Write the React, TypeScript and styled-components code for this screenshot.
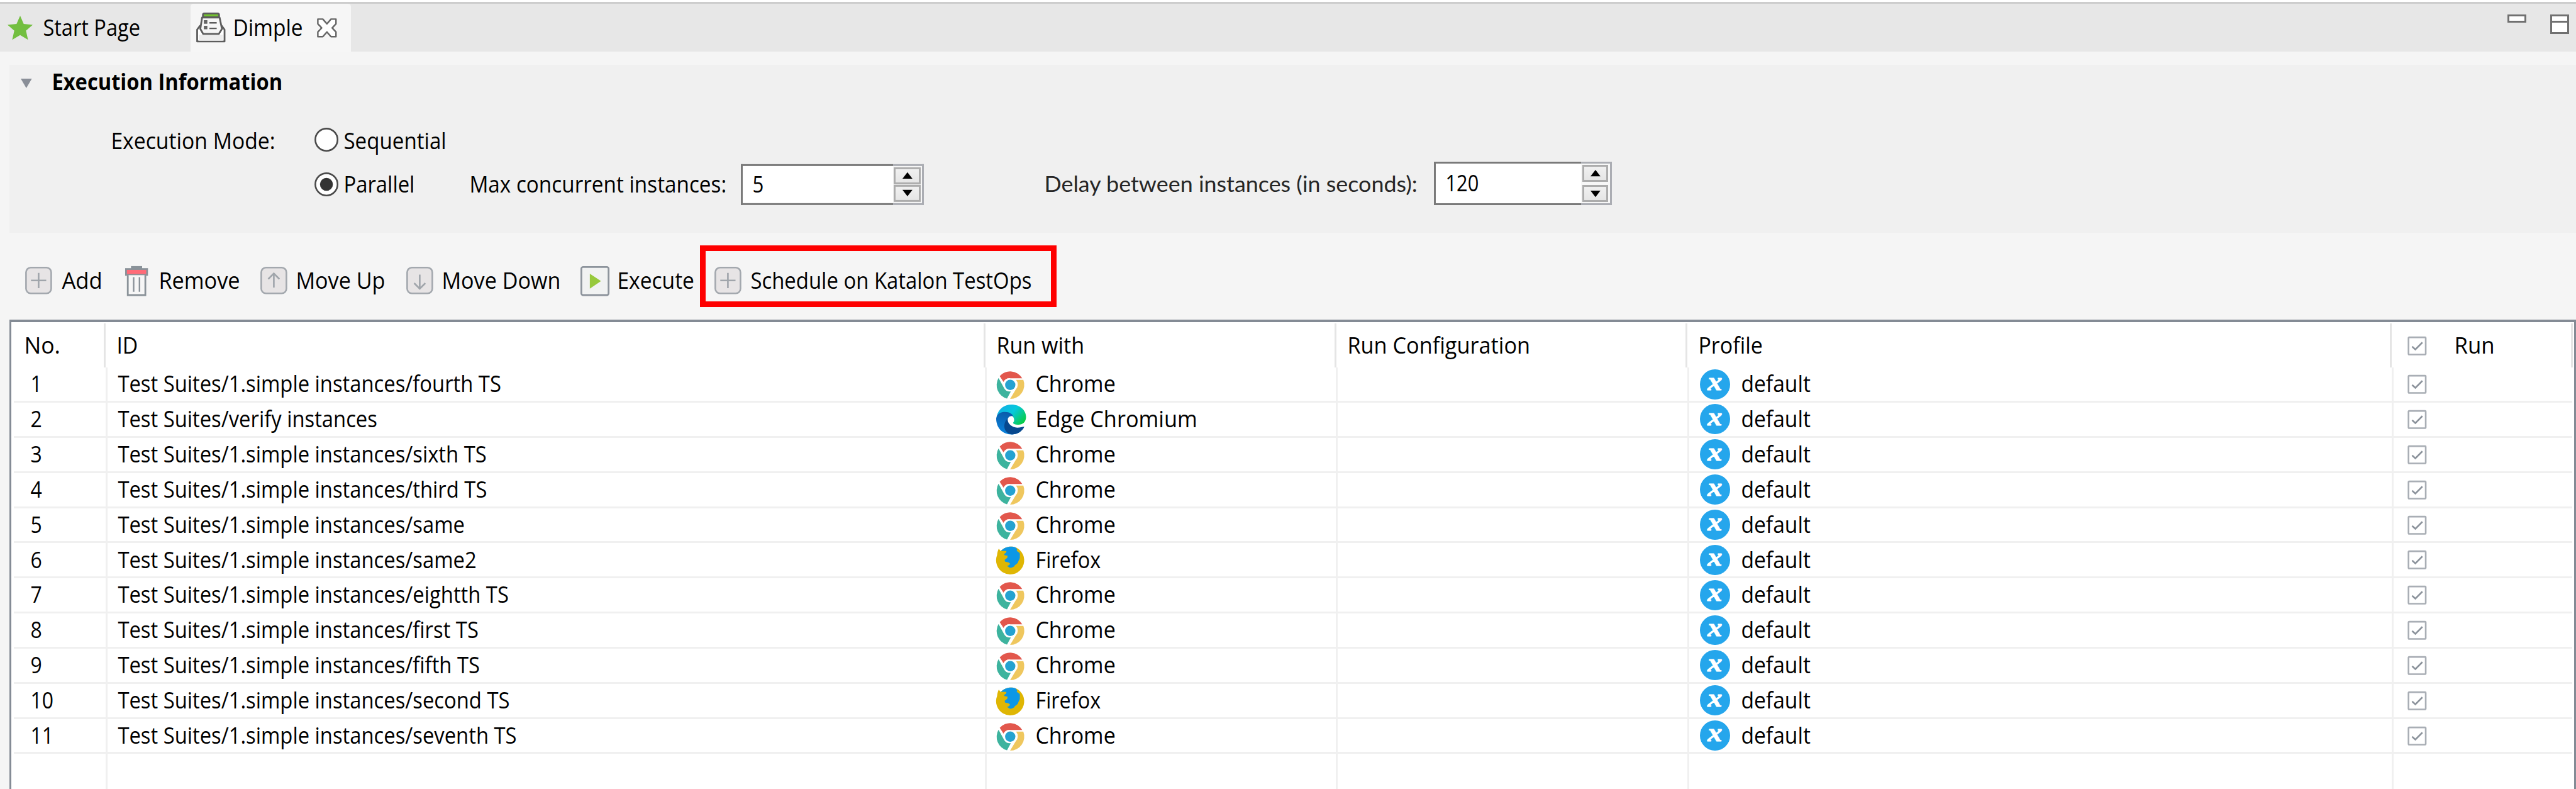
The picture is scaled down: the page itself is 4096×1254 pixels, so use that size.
import React from "react";
import styled, { createGlobalStyle, css } from "styled-components";

/* Design units are converted to CSS pixels through one scale factor. */
const SCALE = 4096 / 4400;
const u = (n: number) => `${(n * SCALE).toFixed(3)}px`;

const GlobalStyle = createGlobalStyle`
  * { box-sizing: border-box; }
  html, body { margin: 0; padding: 0; background: #f5f5f5; }
  body { overflow: hidden; font-family: "Open Sans", "Noto Sans", sans-serif; color: #000; }
`;

const Window = styled.div`
  display: flex;
  flex-direction: column;
  width: 4096px;
  height: 1254px;
  overflow: hidden;
  background: #f5f5f5;
`;

const Label = styled.span<{ $k?: number; $w?: number; $dy?: number; $ml?: number; $bold?: boolean; $humanist?: boolean }>`
  display: block;
  flex: none;
  white-space: nowrap;
  font-size: ${u(39)};
  line-height: ${u(52)};
  transform: translate(${u(1.5)}, ${(p) => u((p.$dy ?? 0) + 1.2)}) scaleX(${(p) => p.$k ?? 0.92});
  transform-origin: left center;
  width: ${(p) => (p.$w === undefined ? "auto" : u(p.$w))};
  margin-left: ${(p) => u(p.$ml ?? 0)};
  font-weight: ${(p) => (p.$bold ? 700 : 400)};
  ${(p) =>
    p.$humanist &&
    css`
      font-family: Lato, sans-serif;
      font-size: ${u(38)};
      color: #262626;
    `}
`;

const Svg = styled.svg<{ $w: number; $h: number; $dy?: number; $ml?: number }>`
  display: block;
  flex: none;
  width: ${(p) => u(p.$w)};
  height: ${(p) => u(p.$h)};
  margin-left: ${(p) => u(p.$ml ?? 0)};
  transform: translateY(${(p) => u(p.$dy ?? 0)});
  overflow: visible;
`;

/* ---------- tabs ---------- */

const TabBar = styled.header`
  display: flex;
  flex: none;
  height: ${u(88.3)};
  border-top: ${u(3.3)} solid #fff;
  background: #e7e7e7;
  box-shadow: inset 0 ${u(3.3)} 0 #cdcdcd;
  padding-top: ${u(3.3)};
`;

const Tab = styled.div<{ $width: number; $pad: number; $active?: boolean }>`
  display: flex;
  align-items: center;
  width: ${(p) => u(p.$width)};
  padding-left: ${(p) => u(p.$pad)};
  background: ${(p) => (p.$active ? "#f6f6f6" : "transparent")};
  border-radius: ${u(5)} ${u(5)} 0 0;
`;

const WindowControls = styled.div`
  display: flex;
  align-items: flex-start;
  gap: ${u(41)};
  margin: ${u(18.5)} ${u(12)} 0 auto;
`;

const MinimizeMark = styled.div`
  width: ${u(32)};
  height: ${u(13.5)};
  border: ${u(3.3)} solid #707070;
  background: #fff;
`;

const MaximizeMark = styled.div`
  display: flex;
  flex-direction: column;
  width: ${u(32)};
  height: ${u(33)};
  border: ${u(3.3)} solid #707070;
  background: #fff;

  &::before {
    content: "";
    height: ${u(6.8)};
    border-bottom: ${u(3.3)} solid #707070;
  }
`;

/* ---------- execution section ---------- */

const Section = styled.section`
  display: flex;
  flex-direction: column;
  flex: none;
  height: ${u(287)};
  margin: ${u(22)} 0 0 ${u(16)};
  background: #f0f0f0;
`;

const SectionTitle = styled.div`
  display: flex;
  align-items: center;
  height: ${u(52)};
  padding-left: ${u(19)};
  margin-bottom: ${u(37)};
`;

const FormRow = styled.div`
  display: flex;
  align-items: center;
  height: ${u(76)};
`;

const FormCaption = styled.div`
  flex: none;
  width: ${u(521)};
  padding-left: ${u(172)};
`;

const SpinnerBox = styled.div<{ $w: number; $h: number; $dy: number; $side: number }>`
  display: grid;
  grid-template-columns: 1fr ${(p) => u(p.$side)};
  flex: none;
  width: ${(p) => u(p.$w)};
  height: ${(p) => u(p.$h)};
  transform: translateY(${(p) => u(p.$dy)});
`;

const SpinnerValue = styled.div`
  display: flex;
  align-items: center;
  background: #fff;
  border: ${u(3.3)} solid #7a7a7a;
  border-right: 0;
  padding-left: ${u(15)};
`;

const SpinnerButtons = styled.div`
  display: flex;
  flex-direction: column;
  justify-content: space-between;
  padding: ${u(2.5)} ${u(2.5)} ${u(2.5)} ${u(2)};
  background: #f7f7f7;
  border: ${u(3.3)} solid #abadb3;
  border-left: 0;
`;

const SpinnerButton = styled.div`
  display: flex;
  align-items: center;
  justify-content: center;
  height: ${u(28.5)};
  border: ${u(3.3)} solid #acacac;
  background: linear-gradient(#f0f0f0, #e6e6e6);
`;

/* ---------- toolbar ---------- */

const Toolbar = styled.nav`
  display: flex;
  align-items: center;
  flex: none;
  height: ${u(148)};
  padding-left: ${u(43)};
`;

const Tool = styled.div<{ $w: number }>`
  display: flex;
  align-items: center;
  flex: none;
  width: ${(p) => u(p.$w)};
`;

const Highlight = styled.div`
  display: flex;
  align-items: center;
  width: ${u(609)};
  height: ${u(105)};
  padding-left: ${u(15)};
  border: ${u(10)} solid #fe0000;
`;

/* ---------- table ---------- */

const Table = styled.main`
  display: flex;
  flex-direction: column;
  flex: 1;
  min-height: 0;
  margin-left: ${u(16)};
  background: #fff;
  border: solid #848b95;
  border-width: ${u(4.5)} ${u(3.3)} 0 ${u(3.3)};
`;

const HeaderRow = styled.div`
  display: grid;
  flex: none;
  grid-template-columns: ${[161, 1503, 599, 600, 1203, 309].map(u).join(" ")};
  height: ${u(78)};
  padding-top: ${u(2.5)};
`;

const HeaderCell = styled.div<{ $pad: number }>`
  display: flex;
  align-items: center;
  padding-left: ${(p) => u(p.$pad)};
  border-right: ${u(3.3)} solid #e5e5e5;
`;

const BodyRow = styled.div<{ $fill?: boolean }>`
  display: grid;
  flex: ${(p) => (p.$fill ? "1" : "none")};
  grid-template-columns: ${[160, 1502.5, 599.5, 600, 1203, 305].map(u).join(" ")};
  height: ${(p) => (p.$fill ? "auto" : u(60))};
  width: ${u(4370)};
  margin-left: ${u(4)};
  border-bottom: ${(p) => (p.$fill ? "0" : `${u(3.3)} solid #f0f0f0`)};
`;

const Cell = styled.div<{ $pad?: number }>`
  display: flex;
  align-items: center;
  min-width: 0;
  padding-left: ${(p) => u(p.$pad ?? 0)};
  border-right: ${u(3.3)} solid #f0f0f0;

  &:last-child {
    border-right: 0;
  }
`;

const BrowserSlot = styled.div`
  flex: none;
  width: ${u(66)};
`;

const ProfileBadge = styled.div`
  display: flex;
  align-items: center;
  justify-content: center;
  flex: none;
  width: ${u(51.5)};
  height: ${u(51.5)};
  border-radius: 50%;
  background: #25a6ec;
  color: #fff;
  font: italic 700 ${u(46)} / ${u(40)} "Liberation Serif", serif;
  -webkit-text-stroke: ${u(1.2)} #fff;

  span {
    display: block;
    transform: translateY(${u(-5)}) scaleX(1.08);
  }
`;

/* ---------- icons ---------- */

const StarIcon = () => (
  <Svg $w={43} $h={41} viewBox="0 0 43 41">
    <path fill="#73bf40" d="M21.5 0 27.6 14 43 15.5 31.500 25.600 35 41 21.500 33 8 41 11.500 25.600 0 15.500 15.400 14Z" />
  </Svg>
);

const SuiteIcon = () => (
  <Svg $w={50} $h={51} viewBox="0 0 50 51" fill="none" stroke="#5c5c5c" strokeWidth="3" strokeLinejoin="round">
    <path fill="#fff" d="M7 22 1.600 29V49.400H48.400V29L43 22" />
    <path fill="#ececec" stroke="none" d="M4.500 38H45.500V48H4.500Z" />
    <path fill="#f6f6f6" d="M10 8.500H40L44 28 38.500 36.500H12L7 28Z" />
    <path fill="#73c22f" d="M11.500 8V4Q11.500 1.500 14 1.500H36.500Q39 1.500 39 4V8Z" />
    <path fill="#666" stroke="none" d="M13 13h6v6h-6zM13 22.500h6v6h-6z" />
    <path strokeWidth="2.600" d="M22.500 17.500H35M22.500 27H35" />
  </Svg>
);

const CloseIcon = () => (
  <Svg $w={34} $h={33} viewBox="0 0 34 33">
    <path
      fill="#fff"
      stroke="#666"
      strokeWidth="2.600"
      strokeLinejoin="round"
      d="M1.500 1.500H10L17 9.500 24 1.500H32.500V9.500L26 16.500 32.500 23.500V31.500H24L17 23.500 10 31.500H1.500V23.500L8 16.500 1.500 9.500Z"
    />
  </Svg>
);

const TwistieIcon = () => (
  <Svg $w={19} $h={16} $dy={6.5} viewBox="0 0 19 16">
    <path fill="#8a8f98" d="M0 0H19L9.500 16Z" />
  </Svg>
);

const Radio = ({ checked }: { checked?: boolean }) => (
  <Svg $w={41} $h={41} $dy={1} viewBox="0 0 41 41">
    <circle cx="20.5" cy="20.5" r="19" fill="#fff" stroke="#4a4a4a" strokeWidth="2.800" />
    {checked && <circle cx="20.5" cy="20.5" r="11" fill="#333" />}
  </Svg>
);

const Arrow = ({ down }: { down?: boolean }) => (
  <Svg $w={17} $h={11} viewBox="0 0 17 11">
    <path fill="#000" d={down ? "M0 0H17L8.500 11Z" : "M8.500 0 17 11H0Z"} />
  </Svg>
);

const BoxIcon = ({ glyph }: { glyph: "plus" | "up" | "down" }) => {
  const paths = {
    plus: "M23 11V37M10 24H36",
    up: "M23 36V12M13.500 21.500 23 12 32.500 21.500",
    down: "M23 14V38M13.500 28.500 23 38 32.500 28.500",
  };
  return (
    <Svg $w={46} $h={48} $dy={8} viewBox="0 0 46 48" fill="none">
      <rect x="1.500" y="2" width="43" height="44" rx="8" fill="#e7e4e5" stroke="#a3a8ae" strokeWidth="2.800" />
      <path d={paths[glyph]} stroke="#a0a5ab" strokeWidth="2.800" />
    </Svg>
  );
};

const TrashIcon = () => (
  <Svg $w={39} $h={51} $dy={8.5} viewBox="0 0 39 51" fill="none" stroke="#8a9299">
    <path d="M10 2.500H29" strokeWidth="5" />
    <rect x="1.500" y="5" width="36" height="10" fill="#ff6b78" strokeWidth="3" />
    <path d="M4.500 15.500V49.500H34.500V15.500" fill="#f6f6f6" strokeWidth="3" />
    <path d="M14.500 19V44M24.500 19V44" strokeWidth="2.600" />
  </Svg>
);

const PlayIcon = () => (
  <Svg $w={49.5} $h={51} $dy={8.5} viewBox="0 0 49.500 51">
    <rect x="1.500" y="1.500" width="46.500" height="48" rx="3" fill="#f1f2f2" stroke="#8d949c" strokeWidth="3" />
    <path fill="#97c93c" d="M16 13 35 25.500 16 38.500Z" />
  </Svg>
);

const CheckIcon = () => (
  <Svg $w={33} $h={33} $dy={0.5} viewBox="0 0 33 33" fill="none">
    <rect x="1.800" y="1.800" width="29.400" height="29.400" rx="1" stroke="#a9aeb5" strokeWidth="2.800" />
    <path d="M8 17.500 13.500 22.500 25.500 10.500" stroke="#8b929b" strokeWidth="2.800" />
  </Svg>
);

const ChromeIcon = () => (
  <Svg $w={48} $h={48} $dy={1.5} viewBox="0 0 48 48">
    <path fill="#e2574c" d="M6 9A24 24 0 0 1 44.500 12.700H24.500A12 12 0 0 0 12.500 19Z" />
    <path fill="#3db39e" d="M4 12.300 13 28.500A12 12 0 0 0 25 35.300L18.500 47.500A24 24 0 0 1 4 12.300Z" />
    <path fill="#efc75e" d="M34 15.500H46.400A24 24 0 0 1 23.800 48L33 32.500A12.500 12.500 0 0 0 34 15.500Z" />
    <circle cx="24" cy="24" r="8.800" fill="#25a2d0" />
  </Svg>
);

const EdgeIcon = () => (
  <Svg $w={51} $h={51} viewBox="0 0 51 51">
    <defs>
      <linearGradient id="edgeTop" x1="0" y1="0.200" x2="1" y2="0.800">
        <stop offset="0" stopColor="#14aee6" />
        <stop offset="0.480" stopColor="#06c8dc" />
        <stop offset="1" stopColor="#08cc3c" />
      </linearGradient>
      <linearGradient id="edgeLeft" x1="0.500" y1="0" x2="0.200" y2="1">
        <stop offset="0" stopColor="#0a5aa8" />
        <stop offset="1" stopColor="#0a84de" />
      </linearGradient>
    </defs>
    <path
      fill="url(#edgeTop)"
      d="M1 20C4 7 14 0 26 0C41 0 51 10 51 21C51 30 45 34.500 38 34.500C32 34.500 28.500 33 29 31C31 28 31 26 30 23C27 15 12 10 1 20Z"
    />
    <path fill="url(#edgeLeft)" d="M0 24C1 15 8 12.500 15 12.500C23 12.500 28 16 29.500 20.500C24 18 20 22 19.500 26C19 35 27 42 38 43.500C48 43 38 51 25.500 51C11 51 0 40 0 24Z" />
    <path fill="#07488e" d="M19.500 24C19 33 27 39 36 39.500C42 39.500 46 37 48 38C45 45 37 51 27 51C18 50 13 43 14 35C14.500 30 17 26 19.500 24Z" />
  </Svg>
);

const FirefoxIcon = () => (
  <Svg $w={48} $h={48} $dy={1.5} viewBox="0 0 48 48">
    <path fill="#dfb603" d="M4.500 4 7.500 8C17-2 33-2 41 7A24 24 0 1 1 1.500 15C2 10 3 7 4.500 4Z" />
    <path
      fill="#0c97e6"
      d="M8 8C14 1 25-1.500 33 1.800L36 5 35 7.500 40 11C41 14 40 16 40.500 19C40 23 38 24 37.500 27C35 31 32 31 31 34C28 36 26 37 23 36.500L18.500 33.500 21 32.500 24 30 21.500 27.500 15 26 14.500 23 19 19.500 19.500 16 14 15 13.500 13 17 10.500 17.500 8 13 7.500Z"
    />
  </Svg>
);

/* ---------- data ---------- */

type Browser = "Chrome" | "Edge Chromium" | "Firefox";

const browserInfo: Record<Browser, { icon: React.ReactNode; k: number }> = {
  Chrome: { icon: <ChromeIcon />, k: 0.938 },
  "Edge Chromium": { icon: <EdgeIcon />, k: 0.945 },
  Firefox: { icon: <FirefoxIcon />, k: 0.894 },
};

const suites: { id: string; browser: Browser }[] = [
  { id: "Test Suites/1.simple instances/fourth TS", browser: "Chrome" },
  { id: "Test Suites/verify instances", browser: "Edge Chromium" },
  { id: "Test Suites/1.simple instances/sixth TS", browser: "Chrome" },
  { id: "Test Suites/1.simple instances/third TS", browser: "Chrome" },
  { id: "Test Suites/1.simple instances/same", browser: "Chrome" },
  { id: "Test Suites/1.simple instances/same2", browser: "Firefox" },
  { id: "Test Suites/1.simple instances/eightth TS", browser: "Chrome" },
  { id: "Test Suites/1.simple instances/first TS", browser: "Chrome" },
  { id: "Test Suites/1.simple instances/fifth TS", browser: "Chrome" },
  { id: "Test Suites/1.simple instances/second TS", browser: "Firefox" },
  { id: "Test Suites/1.simple instances/seventh TS", browser: "Chrome" },
];

const Spinner = ({ value, w, h, dy, side, k }: { value: string; w: number; h: number; dy: number; side: number; k: number }) => (
  <SpinnerBox $w={w} $h={h} $dy={dy} $side={side}>
    <SpinnerValue>
      <Label $k={k} $dy={-2}>{value}</Label>
    </SpinnerValue>
    <SpinnerButtons>
      <SpinnerButton><Arrow /></SpinnerButton>
      <SpinnerButton><Arrow down /></SpinnerButton>
    </SpinnerButtons>
  </SpinnerBox>
);

export default function App() {
  return (
    <Window>
      <GlobalStyle />
      <TabBar>
        <Tab $width={325} $pad={13}>
          <StarIcon />
          <Label $ml={16} $k={0.897} $dy={-2}>Start Page</Label>
        </Tab>
        <Tab $width={274} $pad={10} $active>
          <SuiteIcon />
          <Label $ml={11.5} $w={145} $k={0.92} $dy={-2}>Dimple</Label>
          <CloseIcon />
        </Tab>
        <WindowControls>
          <MinimizeMark />
          <MaximizeMark />
        </WindowControls>
      </TabBar>

      <Section>
        <SectionTitle>
          <TwistieIcon />
          <Label $ml={33} $k={0.9} $dy={0.5} $bold>Execution Information</Label>
        </SectionTitle>
        <FormRow>
          <FormCaption><Label $k={0.928} $dy={0.5}>Execution Mode:</Label></FormCaption>
          <Radio />
          <Label $ml={8} $k={0.913} $dy={0.5}>Sequential</Label>
        </FormRow>
        <FormRow>
          <FormCaption />
          <Radio checked />
          <Label $ml={8} $w={214} $k={0.905}>Parallel</Label>
          <Label $w={465.5} $k={0.917}>Max concurrent instances:</Label>
          <Spinner value="5" w={313} h={70} dy={2} side={53.5} k={0.86} />
          <Label $ml={203.5} $w={667} $k={1.015} $humanist>Delay between instances (in seconds):</Label>
          <Spinner value="120" w={304} h={74.5} dy={0} side={52} k={0.85} />
        </FormRow>
      </Section>

      <Toolbar>
        <Tool $w={171}><BoxIcon glyph="plus" /><Label $ml={15.5} $k={0.957} $dy={6}>Add</Label></Tool>
        <Tool $w={230.5}><TrashIcon /><Label $ml={17} $k={0.945} $dy={6}>Remove</Label></Tool>
        <Tool $w={249.5}><BoxIcon glyph="up" /><Label $ml={13.5} $k={0.94} $dy={6}>Move Up</Label></Tool>
        <Tool $w={297.5}><BoxIcon glyph="down" /><Label $ml={13.5} $k={0.94} $dy={6}>Move Down</Label></Tool>
        <Tool $w={204.5}><PlayIcon /><Label $ml={11.5} $k={0.925} $dy={6}>Execute</Label></Tool>
        <Highlight>
          <BoxIcon glyph="plus" /><Label $ml={14} $k={0.906} $dy={6}>Schedule on Katalon TestOps</Label>
        </Highlight>
      </Toolbar>

      <Table>
        <HeaderRow>
          <HeaderCell $pad={20}><Label $k={0.98} $dy={-2}>No.</Label></HeaderCell>
          <HeaderCell $pad={17}><Label $k={0.93} $dy={-2}>ID</Label></HeaderCell>
          <HeaderCell $pad={17.5}><Label $k={0.938} $dy={-2}>Run with</Label></HeaderCell>
          <HeaderCell $pad={17.5}><Label $k={0.944} $dy={-2}>Run Configuration</Label></HeaderCell>
          <HeaderCell $pad={17.5}><Label $k={0.936} $dy={-2}>Profile</Label></HeaderCell>
          <HeaderCell $pad={27}>
            <CheckIcon />
            <Label $ml={45} $k={0.96} $dy={-2}>Run</Label>
          </HeaderCell>
        </HeaderRow>
        {suites.map((s, i) => (
          <BodyRow key={s.id}>
            <Cell $pad={27}><Label $k={0.88} $dy={-2.5}>{i + 1}</Label></Cell>
            <Cell $pad={16.5}><Label $k={0.903} $dy={-2.5}>{s.id}</Label></Cell>
            <Cell $pad={15.5}>
              <BrowserSlot>{browserInfo[s.browser].icon}</BrowserSlot>
              <Label $k={browserInfo[s.browser].k} $dy={-2.5}>{s.browser}</Label>
            </Cell>
            <Cell />
            <Cell $pad={18}>
              <ProfileBadge><span>x</span></ProfileBadge>
              <Label $ml={17.5} $k={0.926} $dy={-2.5}>default</Label>
            </Cell>
            <Cell $pad={24}><CheckIcon /></Cell>
          </BodyRow>
        ))}
        <BodyRow $fill>
          <Cell /><Cell /><Cell /><Cell /><Cell /><Cell />
        </BodyRow>
      </Table>
    </Window>
  );
}
